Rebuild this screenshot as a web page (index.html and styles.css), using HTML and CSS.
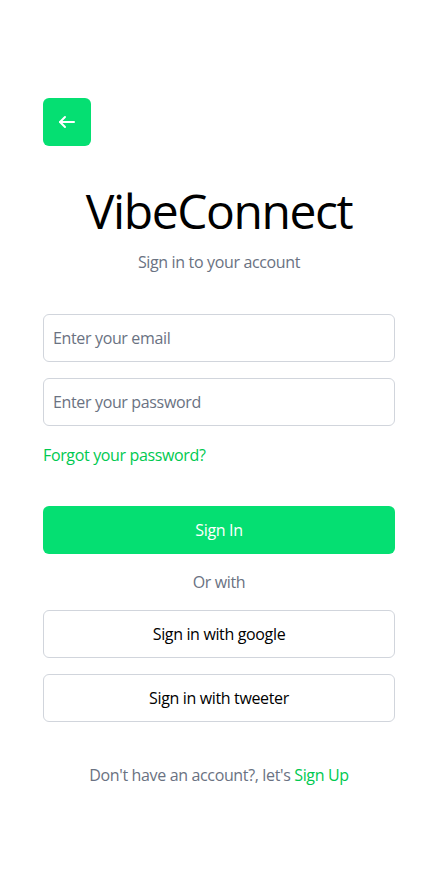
FILE: index.html
```html
<!DOCTYPE html>
<html lang="en">
<head>
<meta charset="utf-8">
<title>VibeConnect - Sign in</title>
<link rel="stylesheet" href="styles.css">
</head>
<body>
<main class="page">
  <button class="back" type="button" aria-label="Back">
    <svg width="18" height="14" viewBox="0 0 18 14" fill="none" stroke="#fff" stroke-width="2" stroke-linecap="round" stroke-linejoin="round"><path d="M16 7H2"/><path d="M7 2L2 7l5 5"/></svg>
  </button>
  <h1 class="title">VibeConnect</h1>
  <p class="subtitle">Sign in to your account</p>
  <form class="form">
    <input class="field" type="email" placeholder="Enter your email">
    <input class="field" type="password" placeholder="Enter your password">
    <a class="forgot" href="#">Forgot your password?</a>
    <button class="primary" type="button">Sign In</button>
    <p class="or">Or with</p>
    <button class="social" type="button">Sign in with google</button>
    <button class="social" type="button">Sign in with tweeter</button>
  </form>
  <p class="footer">Don't have an account?, let's <a class="link" href="#">Sign Up</a></p>
</main>
</body>
</html>
```

FILE: styles.css
```css
* { box-sizing: border-box; }
html, body { margin: 0; padding: 0; background: #fff; }
body {
  font-family: "Open Sans", "Noto Sans", sans-serif;
  font-size: 16px;
  line-height: 24px;
  letter-spacing: -0.022em;
  color: #000;
  padding-right: 9px;
}
.page {
  width: 352px;
  margin: 0 auto;
  padding-top: 98px;
  display: flex;
  flex-direction: column;
}
.back {
  width: 48px;
  height: 48px;
  border: 0;
  border-radius: 6px;
  background: #05df72;
  display: flex;
  align-items: center;
  justify-content: center;
  padding: 0;
}
.title {
  margin: 41px 0 0;
  font-size: 48px;
  line-height: 48px;
  font-weight: 400;
  letter-spacing: -0.03em;
  text-align: center;
}
.subtitle {
  margin: 15px 0 0;
  text-align: center;
  color: #6a7282;
}
.form {
  margin-top: 40px;
  display: flex;
  flex-direction: column;
}
.field {
  height: 48px;
  border: 1px solid #d1d5dc;
  border-radius: 6px;
  padding: 0 9px;
  font: inherit;
  letter-spacing: inherit;
  color: #000;
  margin-bottom: 16px;
}
.field::placeholder { color: #6a7282; }
.forgot {
  margin-top: 1px;
  color: #00c950;
  text-decoration: none;
  align-self: flex-start;
}
.primary {
  margin-top: 39px;
  height: 48px;
  border: 0;
  border-radius: 6px;
  background: #05df72;
  color: #fff;
  font: inherit;
  letter-spacing: inherit;
}
.or {
  margin: 16px 0 0;
  text-align: center;
  color: #6a7282;
}
.social {
  margin-top: 16px;
  height: 48px;
  background: #fff;
  border: 1px solid #d1d5dc;
  border-radius: 6px;
  font: inherit;
  letter-spacing: inherit;
  color: #000;
}
.footer {
  margin: 41px 0 0;
  text-align: center;
  color: #6a7282;
}
.link { color: #00c950; text-decoration: none; }
```
